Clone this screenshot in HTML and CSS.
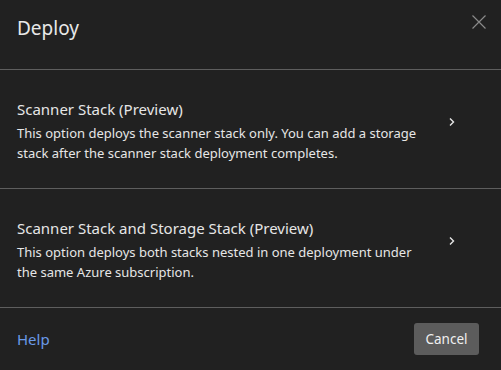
FILE: index.html
```html
<!DOCTYPE html>
<html lang="en">
<head>
    <meta charset="UTF-8">
    <meta name="viewport" content="width=device-width, initial-scale=1.0">
    <title>Deploy</title>
    <link rel="stylesheet" href="styles.css">
</head>
<body>
    <div class="dialog">
        <div class="dialog-header">
            <h1 class="dialog-title">Deploy</h1>
            <button class="close-button" aria-label="Close">
                <svg width="14" height="14" viewBox="0 0 14 14">
                    <path d="M0.5 0.5 L13.5 13.5 M13.5 0.5 L0.5 13.5" stroke="#8a8a8a" stroke-width="1.2" fill="none"/>
                </svg>
            </button>
        </div>

        <div class="option-row">
            <div class="option-text">
                <div class="option-title">Scanner Stack (Preview)</div>
                <div class="option-desc">This option deploys the scanner stack only. You can add a storage stack after the scanner stack deployment completes.</div>
            </div>
            <span class="chevron">
                <svg width="8" height="10" viewBox="0 0 8 10">
                    <path d="M2 1.5 L5.5 5 L2 8.5" stroke="#e6e6e6" stroke-width="1.4" fill="none"/>
                </svg>
            </span>
        </div>

        <div class="option-row">
            <div class="option-text">
                <div class="option-title">Scanner Stack and Storage Stack (Preview)</div>
                <div class="option-desc">This option deploys both stacks nested in one deployment under the same Azure subscription.</div>
            </div>
            <span class="chevron">
                <svg width="8" height="10" viewBox="0 0 8 10">
                    <path d="M2 1.5 L5.5 5 L2 8.5" stroke="#e6e6e6" stroke-width="1.4" fill="none"/>
                </svg>
            </span>
        </div>

        <div class="dialog-footer">
            <a class="help-link" href="#">Help</a>
            <button class="cancel-button">Cancel</button>
        </div>
    </div>
</body>
</html>
```

FILE: styles.css
```css
* {
    margin: 0;
    padding: 0;
    box-sizing: border-box;
}

html, body {
    height: 100%;
    width: 100%;
    overflow: hidden;
}

body {
    font-family: 'Noto Sans', 'Open Sans', Arial, sans-serif;
    background-color: #212121;
    color: #e6e6e6;
}

.dialog {
    width: 100%;
    height: 100%;
    display: flex;
    flex-direction: column;
}

.dialog-header {
    height: 70px;
    display: flex;
    justify-content: space-between;
    align-items: flex-start;
    padding: 14px 15px 0 17px;
    border-bottom: 1px solid #5e5e5e;
}

.dialog-title {
    font-size: 19px;
    font-weight: 400;
    line-height: 28px;
    color: #e8e8e8;
}

.close-button {
    background: none;
    border: none;
    cursor: pointer;
    width: 14px;
    height: 14px;
    margin-top: 1px;
}

.close-button svg {
    display: block;
}

.option-row {
    height: 119px;
    display: flex;
    justify-content: space-between;
    align-items: center;
    padding: 4px 45px 0 17px;
    border-bottom: 1px solid #5e5e5e;
    cursor: pointer;
}

.option-text {
    width: 412px;
}

.option-title {
    font-size: 15px;
    line-height: 20px;
    color: #e6e6e6;
    margin-bottom: 4px;
}

.option-desc {
    font-size: 13px;
    line-height: 20px;
    color: #e6e6e6;
}

.chevron {
    display: block;
    margin-bottom: 18px;
}

.chevron svg {
    display: block;
}

.dialog-footer {
    flex: 1;
    display: flex;
    justify-content: space-between;
    align-items: center;
    padding: 0 22px 0 17px;
}

.help-link {
    font-size: 15px;
    color: #6a9ae8;
    text-decoration: none;
}

.cancel-button {
    width: 65px;
    height: 32px;
    background-color: #5c5c5c;
    color: #f0f0f0;
    border: none;
    border-radius: 3px;
    font-family: inherit;
    font-size: 13.5px;
    cursor: pointer;
}
```
